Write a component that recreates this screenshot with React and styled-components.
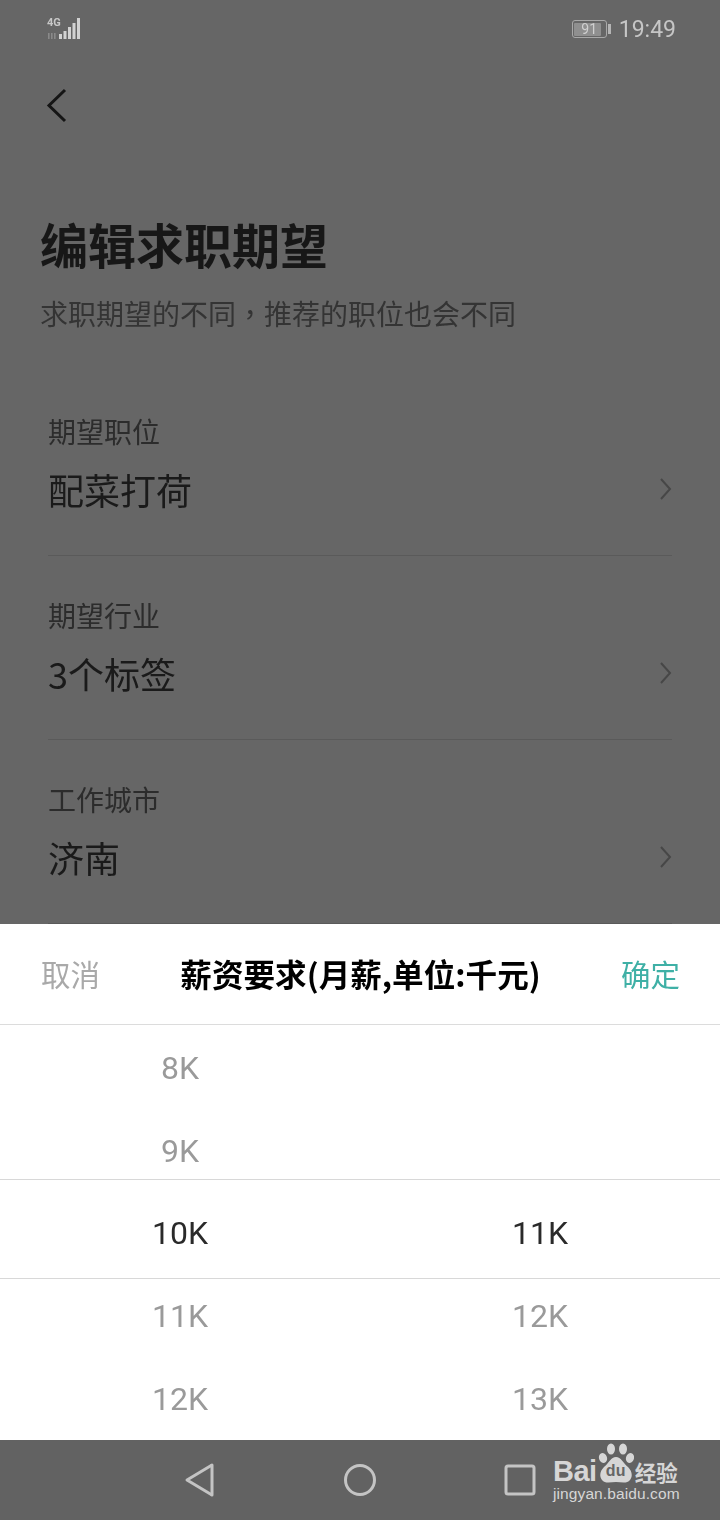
import styled, { createGlobalStyle } from "styled-components";

const GlobalStyle = createGlobalStyle`
  html, body {
    margin: 0;
    padding: 0;
    background: #666666;
  }
  * {
    box-sizing: border-box;
  }
`;

const rows = [
  { label: "期望职位", value: "配菜打荷" },
  { label: "期望行业", value: "3个标签" },
  { label: "工作城市", value: "济南" },
];

const leftColumn = ["8K", "9K", "10K", "11K", "12K"];
const rightColumn = ["", "", "11K", "12K", "13K"];

const App = () => {
  return (
    <Page>
      <GlobalStyle />
      <Content>
        <StatusBar>
          <Network>
            <NetworkLabel>4G</NetworkLabel>
            <svg width="34" height="22" viewBox="0 0 34 22">
              <g fill="#8a8a8a">
                <rect x="1" y="15" width="1.6" height="6" />
                <rect x="4" y="15" width="1.6" height="6" />
                <rect x="7" y="15" width="1.6" height="6" />
              </g>
              <g fill="#d2d2d2">
                <rect x="12" y="16" width="3" height="5" />
                <rect x="16.5" y="13" width="3" height="8" />
                <rect x="21" y="9" width="3" height="12" />
                <rect x="25.5" y="5" width="3" height="16" />
                <rect x="30" y="0" width="3" height="21" />
              </g>
            </svg>
          </Network>
          <StatusRight>
            <Battery>
              <BatteryBody>
                <BatteryFill />
                <BatteryText>91</BatteryText>
              </BatteryBody>
              <BatteryCap />
            </Battery>
            <Clock>19:49</Clock>
          </StatusRight>
        </StatusBar>

        <BackButton>
          <svg width="24" height="38" viewBox="0 0 24 38">
            <path
              d="M20 3 L4 18.5 L20 34"
              fill="none"
              stroke="#151515"
              strokeWidth="3"
            />
          </svg>
        </BackButton>

        <Title>编辑求职期望</Title>
        <Subtitle>
          求职期望的不同<CenteredComma>，</CenteredComma>推荐的职位也会不同
        </Subtitle>

        <Form>
          {rows.map((row) => (
            <Row key={row.label}>
              <RowText>
                <RowLabel>{row.label}</RowLabel>
                <RowValue>{row.value}</RowValue>
              </RowText>
              <svg width="14" height="24" viewBox="0 0 14 24">
                <path
                  d="M2 2 L11 12 L2 22"
                  fill="none"
                  stroke="#474747"
                  strokeWidth="2"
                />
              </svg>
            </Row>
          ))}
        </Form>
      </Content>

      <Sheet>
        <SheetHeader>
          <Cancel>取消</Cancel>
          <SheetTitle>薪资要求(月薪,单位:千元)</SheetTitle>
          <Confirm>确定</Confirm>
        </SheetHeader>
        <Wheel>
          <SelectionBand />
          <WheelColumn>
            {leftColumn.map((item, i) => (
              <WheelItem key={i} $active={i === 2}>
                {item}
              </WheelItem>
            ))}
          </WheelColumn>
          <WheelColumn>
            {rightColumn.map((item, i) => (
              <WheelItem key={i} $active={i === 2}>
                {item}
              </WheelItem>
            ))}
          </WheelColumn>
        </Wheel>
      </Sheet>

      <NavBar>
        <svg width="32" height="36" viewBox="0 0 32 36">
          <path
            d="M28 3 L3 18 L28 33"
            fill="none"
            stroke="#c4c4c4"
            strokeWidth="3"
            strokeLinejoin="round"
          />
          <path d="M28 3 L28 33" stroke="#c4c4c4" strokeWidth="3" strokeLinecap="round" />
        </svg>
        <svg width="34" height="34" viewBox="0 0 34 34">
          <circle cx="17" cy="17" r="14.5" fill="none" stroke="#c4c4c4" strokeWidth="3" />
        </svg>
        <svg width="32" height="32" viewBox="0 0 32 32">
          <rect x="2" y="2" width="28" height="28" rx="2" fill="none" stroke="#c4c4c4" strokeWidth="3" />
        </svg>
      </NavBar>

      <Watermark>
        <BrandLine>
          <BrandWord>Bai</BrandWord>
          <Paw>
            <svg width="36" height="40" viewBox="0 0 36 40">
              <g fill="#d6d6d6">
                <ellipse cx="5" cy="15" rx="4" ry="5" transform="rotate(-18 5 15)" />
                <ellipse cx="13" cy="6" rx="4" ry="5.5" />
                <ellipse cx="25" cy="6" rx="4" ry="5.5" />
                <ellipse cx="32" cy="15" rx="4" ry="5" transform="rotate(18 32 15)" />
                <path d="M18 14 C13 14 11 20 6 24 C2 28 1 33 4 37 C7 41 13 39 18 39 C23 39 29 41 32 37 C35 33 34 28 30 24 C25 20 23 14 18 14 Z" />
              </g>
            </svg>
            <PawText>du</PawText>
          </Paw>
          <BrandCn>经验</BrandCn>
        </BrandLine>
        <BrandUrl>jingyan.baidu.com</BrandUrl>
      </Watermark>
    </Page>
  );
};

const Page = styled.div`
  position: relative;
  width: 720px;
  height: 1520px;
  overflow: hidden;
  background: #666666;
  display: flex;
  flex-direction: column;
  font-family: "Noto Sans CJK SC", "Noto Sans", sans-serif;
`;

const Content = styled.div`
  height: 924px;
  flex: none;
  overflow: hidden;
  padding: 0 48px 0 41px;
  will-change: transform;
`;

const StatusBar = styled.div`
  height: 58px;
  display: flex;
  align-items: center;
  justify-content: space-between;
  margin-right: -4px;
`;

const Network = styled.div`
  position: relative;
  margin-left: 6px;
  width: 34px;
  height: 22px;
`;

const NetworkLabel = styled.span`
  position: absolute;
  left: 0;
  top: -1px;
  font-family: "Roboto", sans-serif;
  font-size: 11px;
  line-height: 11px;
  font-weight: 700;
  color: #c8c8c8;
`;

const StatusRight = styled.div`
  display: flex;
  align-items: center;
  gap: 8px;
`;

const Battery = styled.div`
  display: flex;
  align-items: center;
  gap: 1px;
`;

const BatteryBody = styled.div`
  position: relative;
  width: 35px;
  height: 18px;
  border: 1.5px solid #a8a8a8;
  border-radius: 3px;
  padding: 1.5px;
`;

const BatteryFill = styled.div`
  width: 88%;
  height: 100%;
  background: #8f8f8f;
  border-radius: 1px;
`;

const BatteryText = styled.span`
  position: absolute;
  inset: 0;
  display: flex;
  align-items: center;
  justify-content: center;
  font-family: "Roboto", sans-serif;
  font-size: 14px;
  color: #d0d0d0;
`;

const BatteryCap = styled.div`
  width: 3px;
  height: 10px;
  background: #b5b5b5;
`;

const Clock = styled.span`
  font-family: "Roboto", sans-serif;
  font-size: 23px;
  line-height: 28px;
  color: #c6c6c6;
  margin-top: 1px;
`;

const BackButton = styled.div`
  height: 38px;
  margin: 29px 0 0 4px;
`;

const Title = styled.h1`
  margin: 88px 0 0 -1px;
  font-size: 48px;
  line-height: 60px;
  font-weight: 700;
  color: #171717;
  white-space: nowrap;
`;

const Subtitle = styled.p`
  margin: 20px 0 0 -1px;
  font-size: 28px;
  line-height: 40px;
  color: #343434;
  white-space: nowrap;
`;

const CenteredComma = styled.span`
  font-family: "Noto Sans CJK TC", sans-serif;
`;

const Form = styled.div`
  margin: 39px 0 0 7px;
`;

const Row = styled.div`
  height: 184px;
  display: flex;
  align-items: center;
  justify-content: space-between;
  border-bottom: 1px solid #5a5a5a;

  & > svg {
    margin: 50px -1px 0 0;
  }
`;

const RowText = styled.div`
  display: flex;
  flex-direction: column;
  margin-bottom: 2px;
`;

const RowLabel = styled.span`
  font-size: 28px;
  line-height: 40px;
  color: #2c2c2c;
`;

const RowValue = styled.span`
  margin-top: 13px;
  font-size: 36px;
  line-height: 50px;
  color: #1a1a1a;
`;

const Sheet = styled.div`
  height: 516px;
  flex: none;
  background: #ffffff;
`;

const SheetHeader = styled.div`
  height: 101px;
  display: flex;
  align-items: center;
  justify-content: space-between;
  padding: 0 40px 2px 41px;
  border-bottom: 1px solid #dcdcdc;
  will-change: transform;
`;

const Cancel = styled.span`
  font-size: 29.5px;
  line-height: 40px;
  color: #a9a9a9;
`;

const SheetTitle = styled.span`
  font-size: 31.6px;
  line-height: 40px;
  font-weight: 700;
  color: #000000;
  white-space: nowrap;
`;

const Confirm = styled.span`
  font-size: 29.5px;
  line-height: 40px;
  color: #3fb0a6;
`;

const Wheel = styled.div`
  position: relative;
  display: flex;
  height: 415px;
  padding-top: 2px;
`;

const SelectionBand = styled.div`
  position: absolute;
  left: 0;
  right: 0;
  top: 154px;
  height: 100px;
  border-top: 1px solid #d8d8d8;
  border-bottom: 1px solid #d8d8d8;
`;

const WheelColumn = styled.div`
  flex: 1;
  display: flex;
  flex-direction: column;
  will-change: transform;
`;

const WheelItem = styled.div`
  height: 83px;
  display: flex;
  align-items: center;
  justify-content: center;
  font-family: "Roboto", sans-serif;
  font-size: 32px;
  color: ${(props) => (props.$active ? "#2a2a2a" : "#9a9a9a")};
`;

const NavBar = styled.div`
  height: 80px;
  flex: none;
  background: #626262;
  display: flex;
  align-items: center;
  justify-content: space-between;
  padding: 0 184px;
`;

const Watermark = styled.div`
  position: absolute;
  left: 553px;
  top: 1443px;
  display: flex;
  flex-direction: column;
  color: #d6d6d6;
`;

const BrandLine = styled.div`
  display: flex;
  align-items: flex-end;
  height: 40px;
`;

const BrandWord = styled.span`
  font-family: "Liberation Sans", sans-serif;
  font-size: 29px;
  line-height: 29px;
  font-weight: 700;
  letter-spacing: -0.5px;
  margin-bottom: -3px;
`;

const Paw = styled.div`
  position: relative;
  width: 36px;
  height: 40px;
  margin-left: 1px;
`;

const PawText = styled.span`
  position: absolute;
  left: 0;
  right: 0;
  top: 20px;
  text-align: center;
  font-family: "Liberation Sans", sans-serif;
  font-size: 16px;
  line-height: 16px;
  font-weight: 700;
  color: #666666;
`;

const BrandCn = styled.span`
  font-size: 21.5px;
  line-height: 30px;
  font-weight: 700;
  margin: 0 0 -4px 1px;
  white-space: nowrap;
`;

const BrandUrl = styled.span`
  margin-top: 2px;
  font-family: "Liberation Sans", sans-serif;
  font-size: 15.5px;
  line-height: 18px;
  letter-spacing: 0.1px;
  white-space: nowrap;
`;

export default App;
